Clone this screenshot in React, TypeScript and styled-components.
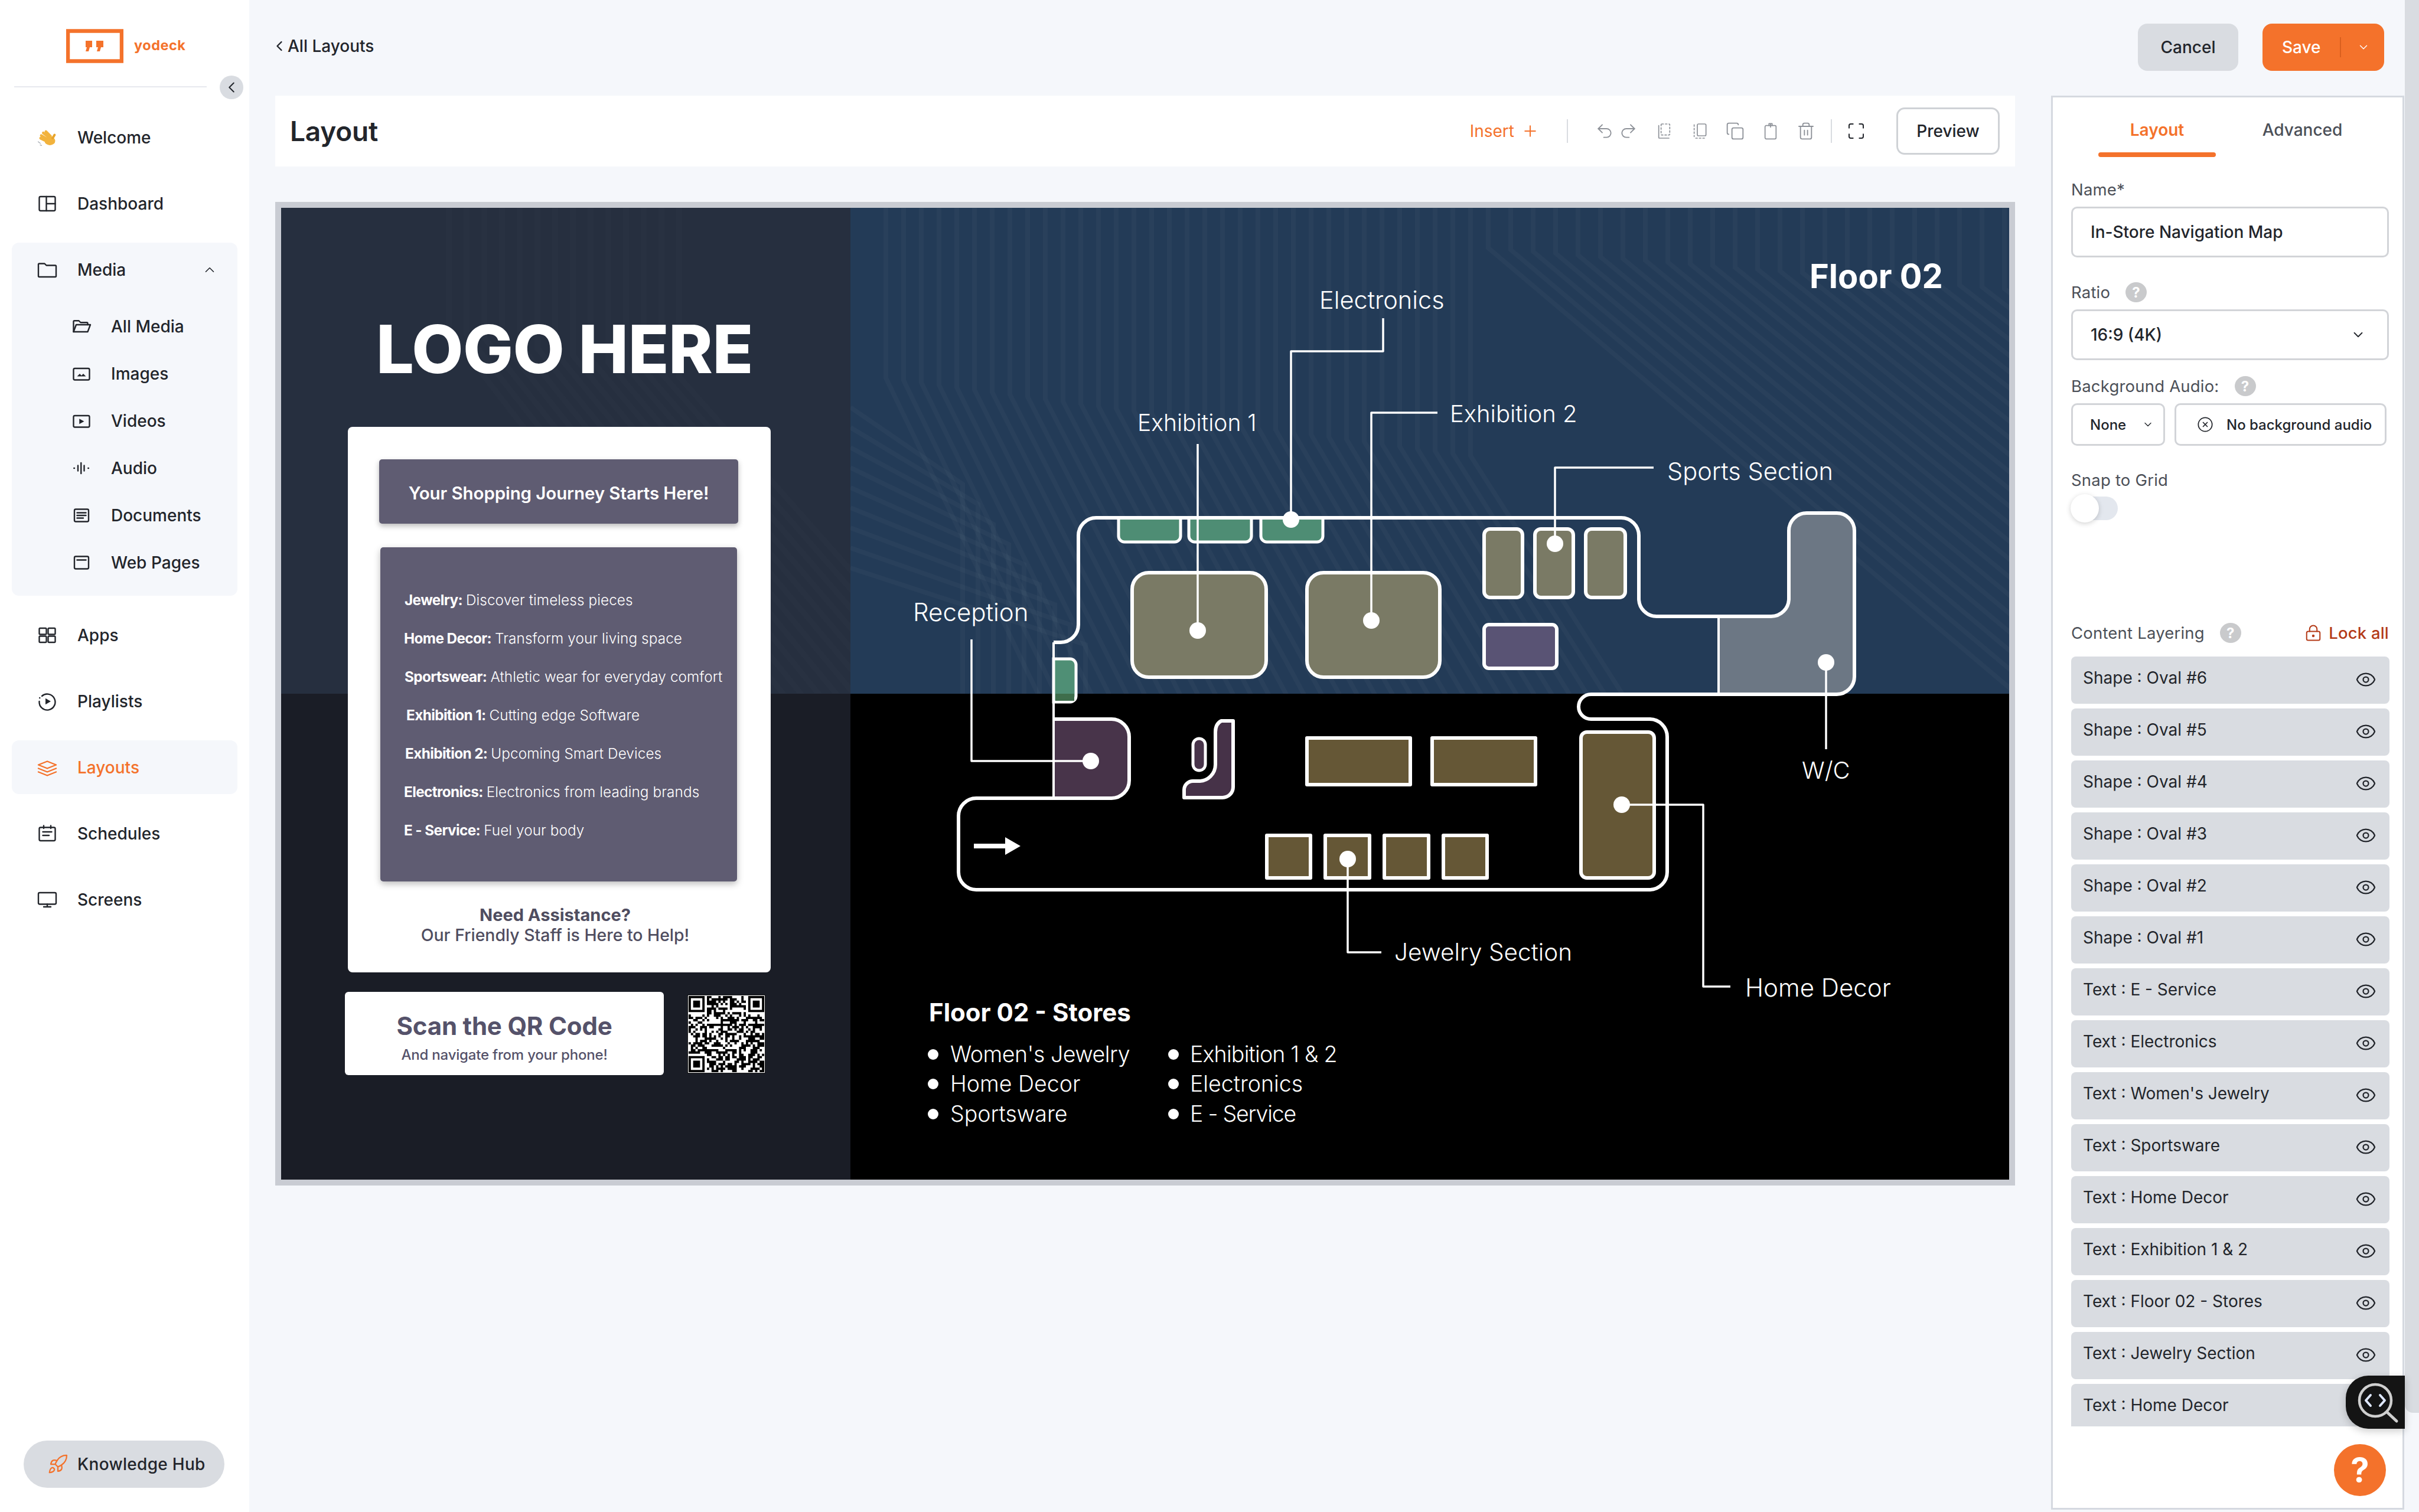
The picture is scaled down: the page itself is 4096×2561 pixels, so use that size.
import { ReactNode } from 'react';
import styled, { createGlobalStyle } from 'styled-components';
import {
  ChevronDown, ChevronLeft, ChevronUp, CircleX, Copy, Eye, LockKeyhole,
  Maximize, Plus, Redo2, Rocket, Trash2, Undo2,
} from 'lucide-react';

const ORANGE = '#f4722b';
const GRAY = '#d9dce1';
const PAGE = '#f5f7fb';
const INK = '#22252b';

const Global = createGlobalStyle`
  html, body { margin: 0; padding: 0; background: ${PAGE}; }
  body { font-family: Inter, "Liberation Sans", sans-serif; color: ${INK}; overflow: hidden; }
  * { box-sizing: border-box; }
`;

const Shell = styled.div`position: relative; display: flex; width: 4096px; height: 2561px; overflow: hidden;`;

/* sidebar */
const Sidebar = styled.aside`
  width: 422px; flex-shrink: 0; background: #fff; display: flex; flex-direction: column; position: relative;
  padding-bottom: 41px;
`;
const LogoRow = styled.div`display: flex; align-items: flex-start; height: 146px; padding: 49px 0 0 112px; gap: 18px;`;
const LogoWord = styled.span`font-weight: 700; font-size: 23.5px; color: ${ORANGE}; line-height: 26px; margin-top: 15px; letter-spacing: .5px;`;
const Rule = styled.div`height: 2px; margin: 0 72px 0 24px; background: #e7e9ee;`;
const Collapse = styled.button`
  position: absolute; left: 372px; top: 128px; width: 40px; height: 40px; border-radius: 50%; border: 0;
  background: ${GRAY}; display: flex; align-items: center; justify-content: center; padding: 0; color: ${INK};
`;
const Nav = styled.nav`display: flex; flex-direction: column; gap: 21px; margin: 39px 20px 0;`;
const NavRow = styled.div<{ $active?: boolean }>`
  height: 91px; display: flex; align-items: center; gap: 33px; padding-left: 42px; border-radius: 12px;
  font-size: 28px; font-weight: 500;
  color: ${p => (p.$active ? ORANGE : INK)}; background: ${p => (p.$active ? PAGE : 'transparent')};
`;
const MediaGroup = styled.div`background: ${PAGE}; border-radius: 12px; padding-bottom: 16px;`;
const MediaHead = styled(NavRow)`padding-right: 34px; margin-bottom: 11px; justify-content: flex-start;`;
const SubRow = styled.div`
  height: 80px; display: flex; align-items: center; gap: 32px; padding-left: 100px;
  font-size: 28px; font-weight: 500; color: ${INK};
`;
const Push = styled.span<{ $r?: number }>`margin-left: auto; display: flex; margin-right: ${p => p.$r ?? 0}px;`;
const Hub = styled.div`
  margin: auto 42px 0 40px; height: 80px; border-radius: 40px; background: ${GRAY}; display: flex; align-items: center;
  padding-left: 40px; gap: 15px; font-size: 28px; font-weight: 500; letter-spacing: .3px; color: ${INK};
`;
const Glyph = styled.svg`
  width: 36px; height: 36px; flex-shrink: 0; fill: none; stroke: currentColor; stroke-width: 1.6;
  stroke-linecap: round; stroke-linejoin: round;
`;
const ToolGlyph = styled(Glyph)`width: 32px; height: 32px; stroke-width: 1.3;`;

/* main column */
const Main = styled.main`flex: 1; min-width: 0; background: ${PAGE}; display: flex; flex-direction: column;`;
const TopBar = styled.header`height: 162px; display: flex; align-items: flex-start; padding: 40px 34px 0 44px;`;
const Back = styled.div`display: flex; align-items: center; height: 76px; font-size: 28px; font-weight: 500; margin-left: -7px;`;
const TopActions = styled.div`margin-left: auto; display: flex; gap: 41px;`;
const CancelBtn = styled.button`
  width: 170px; height: 80px; border: 0; border-radius: 16px; background: ${GRAY}; font: 500 28px Inter, sans-serif; color: ${INK};
`;
const SaveBtn = styled.div`
  width: 206px; height: 80px; border-radius: 16px; background: ${ORANGE}; color: #fff; font-size: 28px; font-weight: 500;
  display: flex; align-items: center; padding-left: 33px;
`;
const SaveDivider = styled.span`width: 2px; height: 34px; background: #d9601f; margin-left: 32px; margin-right: 27px;`;

const Workspace = styled.div`display: flex; flex: 1; min-height: 0; padding-left: 44px; gap: 61px;`;
const Editor = styled.section`width: 2946px; flex-shrink: 0;`;
const ToolBar = styled.div`height: 120px; background: #fff; display: flex; align-items: center; padding: 0 26px 0 25px;`;
const Title = styled.h1`margin: 0; font-size: 46px; font-weight: 600; letter-spacing: -.2px; color: ${INK};`;
const InsertText = styled.span`margin-left: auto; margin-right: 11px; font-size: 28px; font-weight: 400; color: ${ORANGE};`;
const ToolDivider = styled.span<{ $l: number; $r: number }>`
  width: 2px; height: 40px; background: #d9dce1; margin-left: ${p => p.$l}px; margin-right: ${p => p.$r}px;
`;
const ToolIcon = styled.span<{ $gap?: number; $color?: string }>`
  width: 32px; height: 32px; display: flex; align-items: center; justify-content: center;
  margin-right: ${p => p.$gap ?? 0}px; color: ${p => p.$color ?? '#8d9198'};
`;
const PreviewBtn = styled.button`
  width: 175px; height: 80px; margin-left: 52px; background: #fff; border: 3px solid #cfd2d6; border-radius: 14px;
  font: 500 28px Inter, sans-serif; color: ${INK};
`;

const Frame = styled.div`margin-top: 60px; border: 10px solid #c9ccd3; width: 2946px; height: 1666px;`;
const Slide = styled.div`
  position: relative; width: 2926px; height: 1646px; display: grid; grid-template-columns: 964px 1962px; grid-template-rows: 823px 823px;
  overflow: hidden; font-family: Inter, sans-serif;
`;
const Quad = styled.div<{ $bg: string }>`background: ${p => p.$bg};`;
const Overlay = styled.svg`position: absolute; left: 0; top: 0; width: 2926px; height: 1646px;`;
const Free = styled.div<{ $x: number; $y: number }>`position: absolute; left: ${p => p.$x - 476}px; top: ${p => p.$y - 352}px;`;
const MapText = styled(Free)<{ $size?: number; $weight?: number; $track?: number }>`
  transform: translateY(-50%); white-space: nowrap; line-height: 1; color: #fff;
  font-size: ${p => p.$size ?? 40}px; font-weight: ${p => p.$weight ?? 300}; letter-spacing: ${p => p.$track ?? 0}px;
`;
const Bullet = styled(Free)`width: 18px; height: 18px; margin: -9px 0 0 -9px; border-radius: 50%; background: #fff;`;

const LogoHere = styled(MapText)`font-weight: 800;`;
const Card = styled(Free)`
  width: 716px; height: 924px; background: #fff; border-radius: 8px; padding: 55px 0 0 53px; display: flex; flex-direction: column;
`;
const HeadBar = styled.div`
  width: 608px; height: 109px; background: #5f5c72; border-radius: 5px; box-shadow: 0 4px 10px rgba(0,0,0,.28);
  display: flex; align-items: center; justify-content: center; padding-top: 5px;
  color: #fff; font-size: 29.5px; font-weight: 600; letter-spacing: -.1px;
`;
const InfoBox = styled.div`
  width: 604px; height: 566px; margin: 40px 0 0 2px; background: #5f5c72; border-radius: 5px; box-shadow: 0 4px 12px rgba(0,0,0,.28);
  padding-top: 56px; color: #fff;
`;
const InfoLine = styled.div<{ $x: number }>`
  height: 65px; display: flex; align-items: center; white-space: nowrap; padding-left: ${p => p.$x}px;
  font-size: 24.3px; font-weight: 300; letter-spacing: .1px;
`;
const InfoKey = styled.b`font-weight: 700; margin-right: 6px; letter-spacing: -.6px;`;
const Assist = styled.div`
  margin: 40px 0 0 -53px; width: 702px; text-align: center; color: #4f4d60; font-size: 28.4px; line-height: 34px; font-weight: 500;
`;
const AssistKey = styled.div`font-weight: 700; font-size: 29px;`;
const ScanCard = styled(Free)`
  width: 540px; height: 141px; background: #fff; border-radius: 6px; text-align: center; padding-top: 34px; color: #55526a;
`;
const ScanTitle = styled.div`font-size: 42px; line-height: 48px; font-weight: 700; letter-spacing: -.2px;`;
const ScanSub = styled.div`font-size: 24px; line-height: 30px; margin-top: 10px; font-weight: 500; letter-spacing: -.2px;`;
const QrBox = styled(Free)`width: 132px; height: 133px; background: #fff;`;
const QrSvg = styled.svg`display: block; width: 100%; height: 100%;`;

/* right panel */
const Panel = styled.aside`
  width: 598px; height: 2395px; background: #fff; border: 3px solid #d5d9e0; padding: 0 23px 0 31px; display: flex; flex-direction: column;
`;
const Tabs = styled.div`display: flex; height: 101px; margin-left: 46px; gap: 47px;`;
const Tab = styled.div<{ $active?: boolean }>`
  width: 199px; padding-top: 35px; text-align: center; font-size: 28px; line-height: 40px; font-weight: ${p => (p.$active ? 600 : 500)};
  color: ${p => (p.$active ? ORANGE : '#4c5058')}; position: relative;
  &::after { content: ''; display: ${p => (p.$active ? 'block' : 'none')}; position: absolute; left: 0; right: 0; bottom: 0; height: 8px; border-radius: 4px; background: ${ORANGE}; }
`;
const FieldLabel = styled.div<{ $top: number }>`
  display: flex; align-items: center; gap: 26px; height: 36px; margin-top: ${p => p.$top}px; font-size: 27.5px; color: #4c5058; letter-spacing: .2px;
`;
const HelpDot = styled.span`
  width: 36px; height: 34px; border-radius: 50%; background: #c9cacc; color: #fff; font-size: 24px; font-weight: 700;
  display: flex; align-items: center; justify-content: center;
`;
const Box = styled.div<{ $h: number }>`
  height: ${p => p.$h}px; margin-top: 11px; border: 3px solid #d2d4d8; border-radius: 10px; display: flex; align-items: center;
  padding: 0 36px 0 30px; font-size: 28px; color: ${INK}; font-weight: 500;
`;
const BoxRow = styled.div`display: flex; gap: 16px; margin-top: 11px; padding-right: 4px;`;
const MiniBox = styled.div<{ $w: number }>`
  width: ${p => p.$w}px; height: 72px; border: 3px solid #d2d4d8; border-radius: 10px; display: flex; align-items: center;
  font-size: 24px; font-weight: 500; padding-left: 29px; color: ${INK};
`;
const ClearIcon = styled(CircleX)`margin: 0 22px 0 6px;`;
const Track = styled.div`position: relative; width: 79px; height: 40px; margin-top: 10px; border-radius: 20px; background: #e3e7ee;`;
const Knob = styled.span`
  position: absolute; left: -1px; top: -4px; width: 48px; height: 48px; border-radius: 50%; background: #fff; box-shadow: 0 2px 8px rgba(0,0,0,.18);
`;
const LockAll = styled.span`margin-left: auto; display: flex; align-items: center; gap: 11px; color: #b43a17; font-weight: 500; font-size: 27.5px;`;
const Layers = styled.div`display: flex; flex-direction: column; gap: 8px; height: 1304px; overflow: hidden; margin-top: 22px; margin-right: -1px;`;
const LayerRow = styled.div`
  flex-shrink: 0; height: 80px; border-radius: 8px; background: ${GRAY}; padding: 16px 22px 0 20px; display: flex; align-items: flex-start;
  justify-content: space-between; font-size: 28px; line-height: 40px; color: ${INK};
`;
const LayerEye = styled(Eye)`margin-top: 5px;`;

const ScrollRail = styled.div`width: 25px; flex-shrink: 0;`;
const ScrollThumb = styled.div`height: 2393px; margin-left: 1px; background: ${GRAY}; border-radius: 0 0 0 14px;`;
const InspectTab = styled.div`
  position: absolute; right: 24px; bottom: 141px; width: 100px; height: 90px; background: #141414; border-radius: 38px 0 0 38px;
  box-shadow: 0 4px 14px rgba(0,0,0,.2);
`;
const HelpFab = styled.div`
  position: absolute; right: 56px; bottom: 27px; width: 88px; height: 88px; border-radius: 50%; background: ${ORANGE}; color: #fff;
  display: flex; align-items: center; justify-content: center; font-size: 56px; font-weight: 700;
`;

/* QR modules, not a scannable code */
const QR_SIZE = 33;
function buildQr(): string {
  let seed = 73;
  let d = '';
  const inFinder = (x: number, y: number) =>
    (x < 8 && y < 8) || (x >= QR_SIZE - 8 && y < 8) || (x < 8 && y >= QR_SIZE - 8);
  for (let y = 0; y < QR_SIZE; y++) {
    for (let x = 0; x < QR_SIZE; x++) {
      seed = (seed * 1103515245 + 12345) & 0x7fffffff;
      if (!inFinder(x, y) && (seed >> 16) % 100 < 50) d += `M${x} ${y}h1v1h-1z`;
    }
  }
  return d;
}
const QR_PATH = buildQr();
const Finder = ({ x, y }: { x: number; y: number }) => (
  <g>
    <path d={`M${x} ${y}h7v7h-7zM${x + 1} ${y + 1}v5h5v-5z`} fill="#000" fillRule="evenodd" />
    <rect x={x + 2} y={y + 2} width={3} height={3} fill="#000" />
  </g>
);

/* circuit stripes behind the map */
function buildStripes(): string[] {
  const out: string[] = [];
  for (let i = 0; i < 34; i++) {
    const x = 1500 + i * 30;
    out.push(`M${x} 352V${640 + i * 4}L${x + 260} 1180`);
  }
  for (let i = 0; i < 30; i++) {
    const x = 2520 + i * 38;
    out.push(`M${x} 352V${420 + i * 3}L${x + 900} 1180`);
  }
  for (let i = 0; i < 9; i++) {
    const y = 690 + i * 34;
    out.push(`M1440 ${y}L${1630 + i * 26} ${y + 130}V1180`);
  }
  return out;
}
const STRIPES = buildStripes();
const LEFT_STRIPES = Array.from({ length: 14 }, (_, i) => `M${760 + i * 30} 352V${560 + i * 6}L${1240 + i * 30} 1180`);

const LAYERS = [
  'Shape : Oval #6', 'Shape : Oval #5', 'Shape : Oval #4', 'Shape : Oval #3', 'Shape : Oval #2', 'Shape : Oval #1',
  'Text : E - Service', 'Text : Electronics', "Text : Women's Jewelry", 'Text : Sportsware', 'Text : Home Decor',
  'Text : Exhibition 1 & 2', 'Text : Floor 02 - Stores', 'Text : Jewelry Section', 'Text : Home Decor',
];
const INFO: [number, string, string][] = [
  [41, 'Jewelry:', 'Discover timeless pieces'],
  [40, 'Home Decor:', 'Transform your living space'],
  [41, 'Sportswear:', 'Athletic wear for everyday comfort'],
  [44, 'Exhibition 1:', 'Cutting edge Software'],
  [42, 'Exhibition 2:', 'Upcoming Smart Devices'],
  [40, 'Electronics:', 'Electronics from leading brands'],
  [40, 'E - Service:', 'Fuel your body'],
];
const SUB_ITEMS: [string, ReactNode][] = [
  ['All Media', <><path d="M3 18V6.5a1 1 0 011-1h5l2 2h7a1 1 0 011 1V10" /><path d="M3 18l3-8h16l-3 8z" /></>],
  ['Images', <><rect x="3" y="6" width="18" height="13" rx="1.5" /><path d="M7 15l3-3 2 2 2-2 3 3z" fill="currentColor" stroke="none" /></>],
  ['Videos', <><rect x="3" y="6" width="18" height="13" rx="1.5" /><path d="M9.5 9.5l5.5 3-5.5 3z" fill="currentColor" stroke="none" /></>],
  ['Audio', <path d="M3.5 12h.5M8 9v6M11.5 6v12M15 9v6M19.5 12h.5" />],
  ['Documents', <><rect x="4" y="5" width="16" height="14" rx="1.5" /><path d="M7 9h10M7 12h10M7 15h7" /></>],
  ['Web Pages', <><rect x="4" y="5" width="16" height="14" rx="1.5" /><path d="M7 9h10" /></>],
];

const Hand = () => (
  <svg width="36" height="36" viewBox="0 0 32 32">
    <g stroke="#f2b33d" strokeWidth="4" strokeLinecap="round" fill="none">
      <path d="M7 13l10 6M6 17l10 5M10 9l9 7M14 7l7 7" />
    </g>
    <ellipse cx="20" cy="21" rx="8" ry="6.5" fill="#f2b33d" />
    <path d="M24 17l3-5" stroke="#e8a42c" strokeWidth="3.5" strokeLinecap="round" />
    <path d="M2 22l4 3M5 27l3 1" stroke="#9aa0a8" strokeWidth="1" />
  </svg>
);

const Room = ({ d, fill, sw = 6 }: { d: string; fill: string; sw?: number }) => (
  <path d={d} fill={fill} fillOpacity=".97" stroke="#fff" strokeWidth={sw} strokeLinejoin="round" />
);
const rr = (x0: number, y0: number, x1: number, y1: number, r: number) =>
  `M${x0 + r} ${y0}H${x1 - r}A${r} ${r} 0 0 1 ${x1} ${y0 + r}V${y1 - r}A${r} ${r} 0 0 1 ${x1 - r} ${y1}H${x0 + r}A${r} ${r} 0 0 1 ${x0} ${y1 - r}V${y0 + r}A${r} ${r} 0 0 1 ${x0 + r} ${y0}Z`;
const hang = (x0: number, x1: number) => `M${x0} 877V908a10 10 0 0 0 10 10H${x1 - 10}a10 10 0 0 0 10 -10V877`;

const GREEN = '#4f8f75';
const OLIVE = '#7d7c65';
const BROWN = '#685a38';
const PLUM = '#48344a';

export default function App() {
  return (
    <Shell>
      <Global />
      <Sidebar>
        <LogoRow>
          <svg width="97" height="58" viewBox="0 0 97 58">
            <rect x="3" y="3.5" width="91" height="51" fill="none" stroke={ORANGE} strokeWidth="6.5" />
            <path d="M33 20h11v11h-4l-2 7h-5l2-7h-2zM51 20h12v11h-4l-2 7h-5l2-7h-3z" fill={ORANGE} />
          </svg>
          <LogoWord>yodeck</LogoWord>
        </LogoRow>
        <Rule />
        <Collapse><ChevronLeft size={30} strokeWidth={1.6} /></Collapse>
        <Nav>
          <NavRow><Hand />Welcome</NavRow>
          <NavRow>
            <Glyph viewBox="0 0 24 24"><rect x="3" y="4" width="18" height="16" rx="1.5" /><path d="M11 4v16M11 12h10" /></Glyph>
            Dashboard
          </NavRow>
          <MediaGroup>
            <MediaHead>
              <Glyph viewBox="0 0 24 24"><path d="M2 6a1 1 0 011-1h6l2 2h10a1 1 0 011 1v11a1 1 0 01-1 1H3a1 1 0 01-1-1z" /></Glyph>
              Media
              <Push><ChevronUp size={26} strokeWidth={1.5} /></Push>
            </MediaHead>
            {SUB_ITEMS.map(([label, icon]) => (
              <SubRow key={label}><Glyph viewBox="0 0 24 24">{icon}</Glyph>{label}</SubRow>
            ))}
          </MediaGroup>
          <NavRow>
            <Glyph viewBox="0 0 24 24"><rect x="3" y="4" width="8" height="7" rx="1" /><rect x="13" y="4" width="8" height="7" rx="1" /><rect x="3" y="13" width="8" height="7" rx="1" /><rect x="13" y="13" width="8" height="7" rx="1" /></Glyph>
            Apps
          </NavRow>
          <NavRow>
            <Glyph viewBox="0 0 24 24"><path d="M6 6a9 9 0 11-3 6" /><path d="M3.5 8v.1" /><path d="M10 8.5l6 3.5-6 3.5z" fill="currentColor" stroke="none" /></Glyph>
            Playlists
          </NavRow>
          <NavRow $active>
            <Glyph viewBox="0 0 24 24"><path d="M12 5l10 4-10 4L2 9z" /><path d="M2 13l10 4 10-4M2 17l10 4 10-4" /></Glyph>
            Layouts
          </NavRow>
          <NavRow>
            <Glyph viewBox="0 0 24 24"><rect x="3" y="5" width="18" height="15" rx="1.5" /><path d="M8 3v3M16 3v3M7 10h10M7 14h7" /></Glyph>
            Schedules
          </NavRow>
          <NavRow>
            <Glyph viewBox="0 0 24 24"><rect x="2" y="4" width="20" height="13" rx="1.5" /><path d="M12 17v3M8 20h8" /></Glyph>
            Screens
          </NavRow>
        </Nav>
        <Hub><Rocket size={36} color={ORANGE} strokeWidth={1.5} />Knowledge Hub</Hub>
      </Sidebar>

      <Main>
        <TopBar>
          <Back><ChevronLeft size={28} strokeWidth={2} />All Layouts</Back>
          <TopActions>
            <CancelBtn>Cancel</CancelBtn>
            <SaveBtn>Save<SaveDivider /><ChevronDown size={22} strokeWidth={1.6} /></SaveBtn>
          </TopActions>
        </TopBar>
        <Workspace>
          <Editor>
            <ToolBar>
              <Title>Layout</Title>
              <InsertText>Insert</InsertText>
              <ToolIcon $color={ORANGE}><Plus size={30} strokeWidth={1.6} /></ToolIcon>
              <ToolDivider $l={46} $r={46} />
              <ToolIcon $gap={8}><Undo2 size={32} strokeWidth={1.4} /></ToolIcon>
              <ToolIcon $gap={29}><Redo2 size={32} strokeWidth={1.4} /></ToolIcon>
              <ToolIcon $gap={28}>
                <ToolGlyph viewBox="0 0 24 24"><path d="M5 5v15a1 1 0 001 1h12" /><rect x="8" y="3" width="11" height="14" rx="1" strokeDasharray="2 2.5" /></ToolGlyph>
              </ToolIcon>
              <ToolIcon $gap={28}>
                <ToolGlyph viewBox="0 0 24 24"><rect x="9" y="3" width="11" height="15" rx="1.5" /><path d="M5 4v15M7 21h12" strokeDasharray="2 2.5" /></ToolGlyph>
              </ToolIcon>
              <ToolIcon $gap={28}><Copy size={32} strokeWidth={1.4} /></ToolIcon>
              <ToolIcon $gap={28}>
                <ToolGlyph viewBox="0 0 24 24"><rect x="5" y="5" width="14" height="17" rx="1.5" /><path d="M10 5V2.5h4V5M12 3v4" /></ToolGlyph>
              </ToolIcon>
              <ToolIcon><Trash2 size={32} strokeWidth={1.4} /></ToolIcon>
              <ToolDivider $l={26} $r={25} />
              <ToolIcon $color={INK}><Maximize size={32} strokeWidth={1.5} /></ToolIcon>
              <PreviewBtn>Preview</PreviewBtn>
            </ToolBar>
            <Frame>
              <Slide>
                <Quad $bg="#262f3f" />
                <Quad $bg="#233b57" />
                <Quad $bg="#1a1d26" />
                <Quad $bg="#000" />

                <Overlay viewBox="476 352 2926 1646">
                  <defs>
                    <clipPath id="topRight"><rect x="1440" y="352" width="1962" height="823" /></clipPath>
                    <clipPath id="topLeft"><rect x="476" y="352" width="964" height="823" /></clipPath>
                  </defs>
                  <g clipPath="url(#topLeft)" fill="none" stroke="#fff" strokeOpacity=".012" strokeWidth="10">
                    {LEFT_STRIPES.map((d, i) => <path key={i} d={d} />)}
                  </g>
                  <g clipPath="url(#topRight)" fill="none" stroke="#fff" strokeOpacity=".028" strokeWidth="8">
                    {STRIPES.map((d, i) => <path key={i} d={d} />)}
                  </g>

                  {/* rooms */}
                  <path d="M2910 1044H2999A30 30 0 0 0 3029 1014V899A30 30 0 0 1 3059 869H3110A30 30 0 0 1 3140 899V1146A30 30 0 0 1 3110 1176H2910Z" fill="#6e7985" fillOpacity=".97" />
                  <path d="M1784 1218H1882A30 30 0 0 1 1912 1248V1322A30 30 0 0 1 1882 1352H1784Z" fill={PLUM} />
                  <Room d={hang(1894, 1999)} fill={GREEN} sw={5} />
                  <Room d={hang(2013, 2119)} fill={GREEN} sw={5} />
                  <Room d={hang(2135, 2240)} fill={GREEN} sw={5} />
                  <path d="M1784 1116H1812a10 10 0 0 1 10 10V1179a10 10 0 0 1 -10 10H1784Z" fill={GREEN} stroke="#fff" strokeWidth="5" />
                  <rect x="1787" y="1175" width="32" height="12" fill="#3f6e4c" />
                  <Room d={rr(1917, 970, 2144, 1147, 28)} fill={OLIVE} />
                  <Room d={rr(2213, 970, 2438, 1147, 28)} fill={OLIVE} />
                  <Room d={rr(2513, 896, 2578, 1012, 10)} fill={OLIVE} />
                  <Room d={rr(2599, 896, 2664, 1012, 10)} fill={OLIVE} />
                  <Room d={rr(2685, 896, 2752, 1012, 10)} fill={OLIVE} />
                  <Room d={rr(2513, 1058, 2636, 1132, 8)} fill="#5b5475" />
                  <Room d="M2213 1250H2388V1329H2213Z" fill={BROWN} />
                  <Room d="M2425 1250H2600V1329H2425Z" fill={BROWN} />
                  <Room d={rr(2677, 1240, 2801, 1487, 10)} fill={BROWN} />
                  <Room d="M2145 1415H2219V1487H2145Z" fill={BROWN} />
                  <Room d="M2244 1415H2319V1487H2244Z" fill={BROWN} />
                  <Room d="M2344 1415H2419V1487H2344Z" fill={BROWN} />
                  <Room d="M2444 1415H2518V1487H2444Z" fill={BROWN} />
                  <Room d="M2058 1240Q2058 1226 2068 1221H2088V1333A18 18 0 0 1 2070 1351H2005V1338A15 15 0 0 1 2020 1323H2030A28 28 0 0 0 2058 1295Z" fill={PLUM} />
                  <rect x="2020" y="1251" width="21" height="54" rx="10.5" fill={PLUM} stroke="#fff" strokeWidth="5" />

                  {/* floor outline */}
                  <g fill="none" stroke="#fff" strokeLinejoin="round">
                    <path strokeWidth="6" d="M1784 1088H1796A30 30 0 0 0 1826 1058V907A30 30 0 0 1 1856 877H2745A30 30 0 0 1 2775 907V1014A30 30 0 0 0 2805 1044H2999A30 30 0 0 0 3029 1014V899A30 30 0 0 1 3059 869H3110A30 30 0 0 1 3140 899V1146A30 30 0 0 1 3110 1176H2694A21 21 0 0 0 2694 1218H2793A30 30 0 0 1 2823 1248V1477A30 30 0 0 1 2793 1507H1653A30 30 0 0 1 1623 1477V1382A30 30 0 0 1 1653 1352H1882A30 30 0 0 0 1912 1322V1248A30 30 0 0 0 1882 1218H1784" />
                    <path strokeWidth="4" d="M1784 1088V1352M2910 1044V1176" />
                    {/* callouts */}
                    <path strokeWidth="3.5" d="M2342 539V595H2186V880M2028 752V1068M2434 699H2322V1051M2800 792H2633V921M3092 1122V1269M1645 1083V1289H1847M2746 1363H2884V1671H2930M2282 1455V1613H2339" />
                  </g>
                  <path d="M1649 1429H1702V1418L1728 1433L1702 1448V1437H1649Z" fill="#fff" />
                  <g fill="#fff">
                    <circle cx="2186" cy="880" r="14" />
                    <circle cx="2028" cy="1068" r="14" />
                    <circle cx="2322" cy="1051" r="14" />
                    <circle cx="2633" cy="921" r="14" />
                    <circle cx="3092" cy="1122" r="14" />
                    <circle cx="1847" cy="1289" r="14" />
                    <circle cx="2746" cy="1363" r="14" />
                    <circle cx="2282" cy="1455" r="14" />
                  </g>
                </Overlay>

                <LogoHere $x={637} $y={591} $size={113} $track={-.5}>LOGO HERE</LogoHere>
                <Card $x={589} $y={723}>
                  <HeadBar>Your Shopping Journey Starts Here!</HeadBar>
                  <InfoBox>
                    {INFO.map(([x, key, text]) => (
                      <InfoLine key={key} $x={x}><InfoKey>{key}</InfoKey>{text}</InfoLine>
                    ))}
                  </InfoBox>
                  <Assist>
                    <AssistKey>Need Assistance?</AssistKey>
                    Our Friendly Staff is Here to Help!
                  </Assist>
                </Card>
                <ScanCard $x={584} $y={1680}>
                  <ScanTitle>Scan the QR Code</ScanTitle>
                  <ScanSub>And navigate from your phone!</ScanSub>
                </ScanCard>
                <QrBox $x={1164} $y={1685}>
                  <QrSvg viewBox="-0.5 -0.5 34 34" preserveAspectRatio="none">
                    <path d={QR_PATH} fill="#000" />
                    <Finder x={0} y={0} />
                    <Finder x={QR_SIZE - 7} y={0} />
                    <Finder x={0} y={QR_SIZE - 7} />
                    <rect x="-0.4" y="-0.4" width="33.8" height="33.8" fill="none" stroke="#000" strokeWidth=".25" />
                  </QrSvg>
                </QrBox>

                <MapText $x={3064} $y={468} $size={56} $weight={700}>Floor 02</MapText>
                <MapText $x={2234} $y={509} $size={41.5}>Electronics</MapText>
                <MapText $x={1926} $y={715} $size={39}>Exhibition 1</MapText>
                <MapText $x={2455} $y={701}>Exhibition 2</MapText>
                <MapText $x={2823} $y={799} $size={41.5}>Sports Section</MapText>
                <MapText $x={1546} $y={1037} $size={42}>Reception</MapText>
                <MapText $x={3051} $y={1305}>W/C</MapText>
                <MapText $x={2361} $y={1613} $size={40.5}>Jewelry Section</MapText>
                <MapText $x={2955} $y={1673} $size={42}>Home Decor</MapText>
                <MapText $x={1573} $y={1715} $size={42} $weight={700}>Floor 02 - Stores</MapText>

                <Bullet $x={1580} $y={1786} />
                <Bullet $x={1580} $y={1836} />
                <Bullet $x={1580} $y={1887} />
                <Bullet $x={1987} $y={1786} />
                <Bullet $x={1987} $y={1836} />
                <Bullet $x={1987} $y={1887} />
                <MapText $x={1609} $y={1786} $size={37.5} $track={-.5}>Women's Jewelry</MapText>
                <MapText $x={1609} $y={1836} $size={37.5}>Home Decor</MapText>
                <MapText $x={1609} $y={1887} $size={37.5}>Sportsware</MapText>
                <MapText $x={2015} $y={1786} $size={37.5} $track={-.8}>Exhibition 1 &amp; 2</MapText>
                <MapText $x={2015} $y={1836} $size={37.5}>Electronics</MapText>
                <MapText $x={2015} $y={1887} $size={37.5} $track={-1.2}>E - Service</MapText>
              </Slide>
            </Frame>
          </Editor>

          <Panel>
            <Tabs>
              <Tab $active>Layout</Tab>
              <Tab>Advanced</Tab>
            </Tabs>
            <FieldLabel $top={37}>Name*</FieldLabel>
            <Box $h={86}>In-Store Navigation Map</Box>
            <FieldLabel $top={41}>Ratio<HelpDot>?</HelpDot></FieldLabel>
            <Box $h={86}>16:9 (4K)<Push><ChevronDown size={26} strokeWidth={1.7} /></Push></Box>
            <FieldLabel $top={26}>Background Audio:<HelpDot>?</HelpDot></FieldLabel>
            <BoxRow>
              <MiniBox $w={159}>None<Push $r={16}><ChevronDown size={20} strokeWidth={1.6} /></Push></MiniBox>
              <MiniBox $w={359}><ClearIcon size={28} strokeWidth={1.5} />No background audio</MiniBox>
            </BoxRow>
            <FieldLabel $top={40}>Snap to Grid</FieldLabel>
            <Track><Knob /></Track>
            <FieldLabel $top={173}>
              Content Layering<HelpDot>?</HelpDot>
              <LockAll><LockKeyhole size={30} strokeWidth={1.6} />Lock all</LockAll>
            </FieldLabel>
            <Layers>
              {LAYERS.map((name, i) => (
                <LayerRow key={i}>{name}<LayerEye size={36} strokeWidth={1.5} /></LayerRow>
              ))}
            </Layers>
          </Panel>
        </Workspace>
      </Main>
      <ScrollRail><ScrollThumb /></ScrollRail>

      <InspectTab>
        <svg width="100" height="90" viewBox="0 0 100 90">
          <circle cx="50" cy="42" r="27" fill="none" stroke="#cfcfcf" strokeWidth="4.5" />
          <path d="M70 62l16 15" stroke="#cfcfcf" strokeWidth="5" strokeLinecap="round" />
          <path d="M42 33l-8 9 8 9M58 33l8 9-8 9" fill="none" stroke="#dfe8ff" strokeWidth="4" strokeLinecap="round" strokeLinejoin="round" />
        </svg>
      </InspectTab>
      <HelpFab>?</HelpFab>
    </Shell>
  );
}
